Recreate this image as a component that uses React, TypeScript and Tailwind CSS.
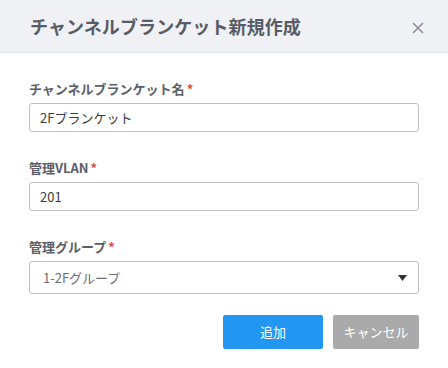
import React from "react";

function Field({ label, children }: { label: string; children: React.ReactNode }) {
  return (
    <div className="flex flex-col">
      <div className="h-[18px] text-[13px] font-bold leading-[18px] text-[#5a5e66]">
        {label}
        <span className="ml-[2px] text-[#e5483b]">*</span>
      </div>
      <div className="mt-[5px]">{children}</div>
    </div>
  );
}

export default function App() {
  return (
    <div
      className="h-[368px] w-[448px] bg-white"
      style={{ fontFamily: '"Noto Sans CJK JP", "Open Sans", sans-serif' }}
    >
      <div className="flex h-[53px] items-center justify-between border-b border-[#e3e4e8] bg-[#f0f1f5] pl-[30px] pr-[24px]">
        <div className="text-[18px] font-bold tracking-[0.1px] text-[#585c66]">
          チャンネルブランケット新規作成
        </div>
        <svg width="12" height="12" viewBox="0 0 12 12" className="mt-[3px]">
          <path d="M1 1 L11 11 M11 1 L1 11" stroke="#8b8f99" strokeWidth="1.6" />
        </svg>
      </div>
      <div className="flex flex-col px-[29px] pt-[27px]">
        <Field label="チャンネルブランケット名">
          <div className="flex h-[29px] items-center rounded-[3px] border border-[#bfc1c7] px-[10px] text-[13px] text-[#3a3a3a]">
            2Fブランケット
          </div>
        </Field>
        <div className="mt-[27px]">
          <Field label="管理VLAN">
            <div className="flex h-[29px] items-center rounded-[3px] border border-[#bfc1c7] px-[10px] text-[13px] text-[#3a3a3a]">
              201
            </div>
          </Field>
        </div>
        <div className="mt-[27px]">
          <Field label="管理グループ">
            <div className="flex h-[33px] items-center justify-between rounded-[3px] border border-[#bfc1c7] pl-[13px] pr-[11px] text-[13px] text-[#6b6e75]">
              <span>1-2Fグループ</span>
              <svg width="9" height="6" viewBox="0 0 9 6">
                <path d="M0 0 L9 0 L4.5 6 Z" fill="#333" />
              </svg>
            </div>
          </Field>
        </div>
        <div className="mt-[21px] flex justify-end gap-[10px]">
          <div className="flex h-[34px] w-[100px] items-center justify-center rounded-[2px] bg-[#2196f3] text-[13px] text-white">
            追加
          </div>
          <div className="flex h-[34px] w-[86px] items-center justify-center rounded-[2px] bg-[#aaaaaa] text-[13px] text-white">
            キャンセル
          </div>
        </div>
      </div>
    </div>
  );
}
